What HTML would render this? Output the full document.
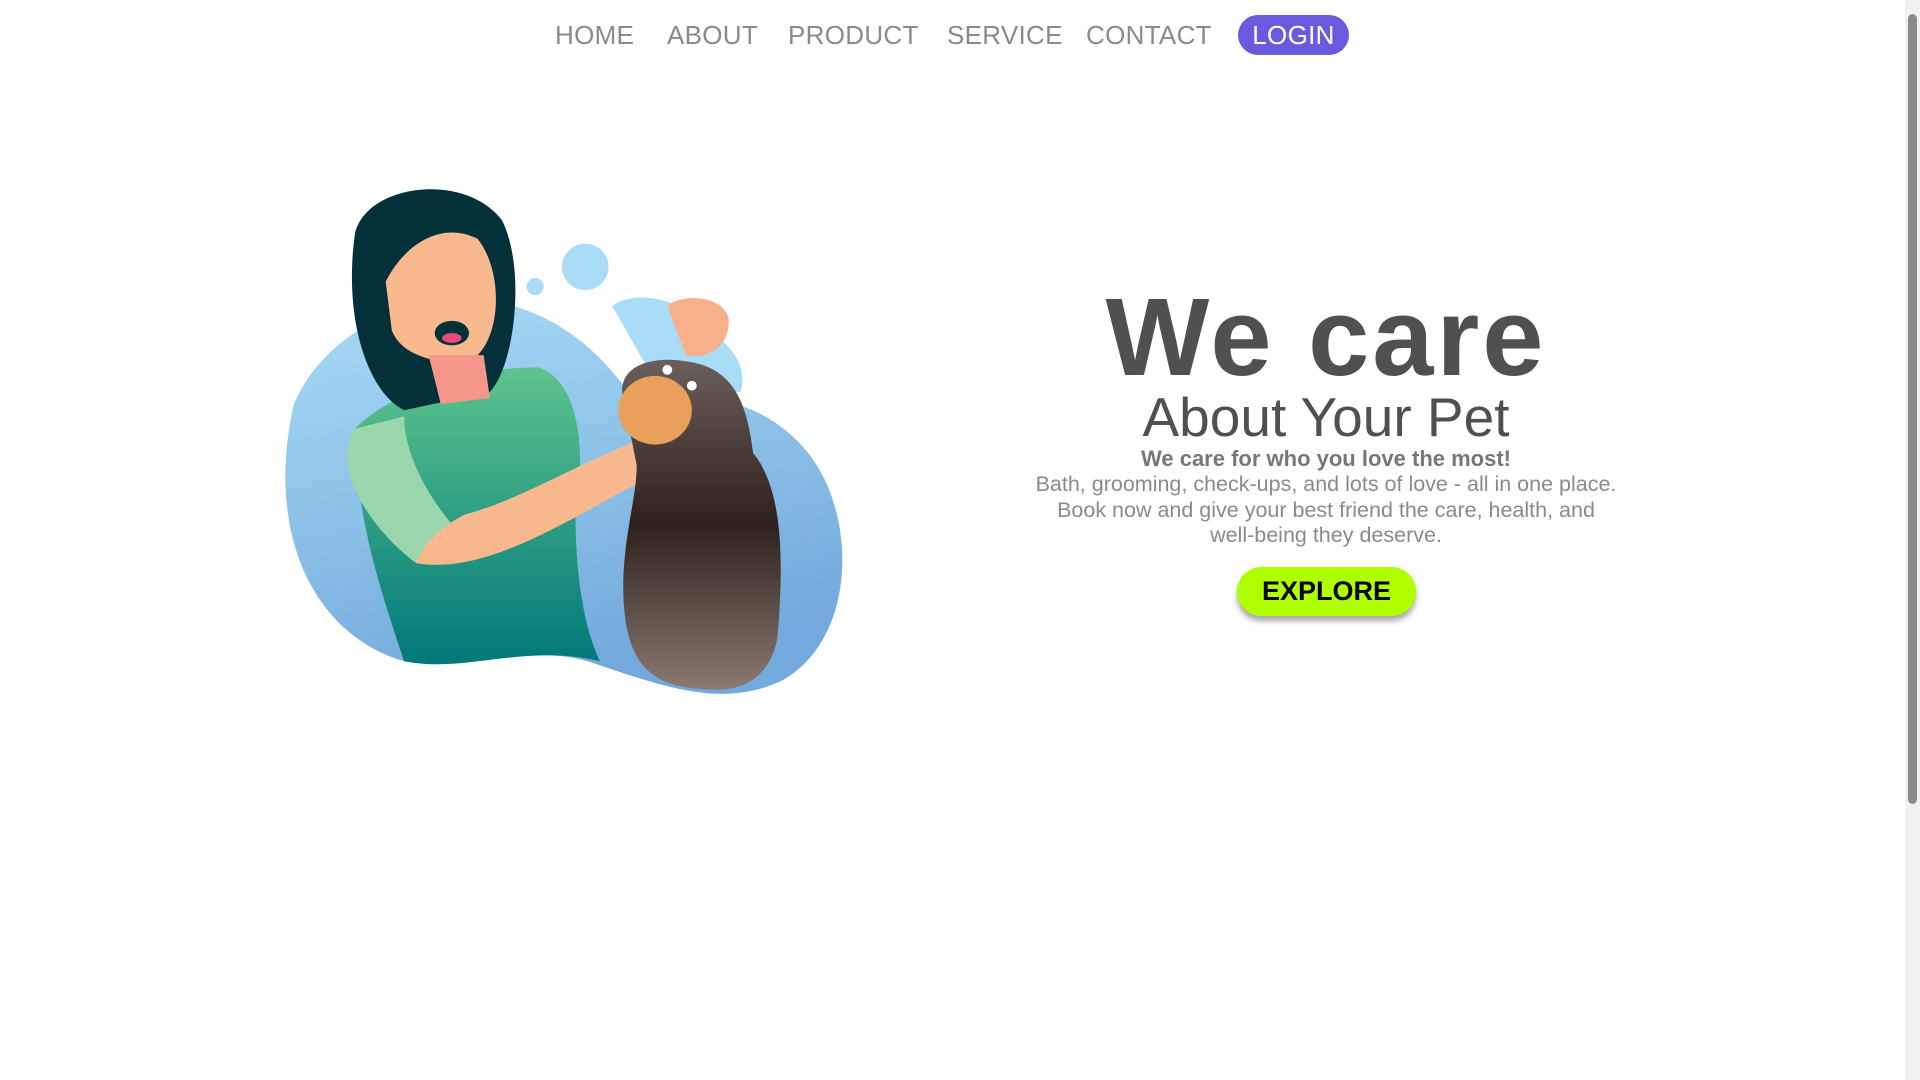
<!DOCTYPE html>
<html><head><meta charset="utf-8"><style>
*{margin:0;padding:0;box-sizing:border-box}
body{width:1920px;height:1080px;overflow:hidden;background:#fff;font-family:"Liberation Sans",sans-serif;position:relative}
nav{position:absolute;top:15px;left:0;width:1905px;height:40px}
nav a{position:absolute;top:0;line-height:40px;font-size:26px;color:#8a8a8a;text-decoration:none;letter-spacing:0.3px}
.login{background:#6a5ae0;color:#fff!important;border-radius:20px;width:111px;text-align:center}
.sb{position:absolute;right:0;top:0;width:15px;height:1080px;background:#f1f1f1}
.sb div{position:absolute;left:3px;top:14px;width:9px;height:790px;background:#8b8b8b;border-radius:5px}
.t{position:absolute;left:976px;width:700px;text-align:center;color:#505050}
.btn{position:absolute;left:1237px;top:567px;width:179px;height:49px;border-radius:25px;background:#b0ff00;box-shadow:0 5px 6px rgba(0,0,0,.35);font-weight:bold;font-size:27px;line-height:49px;text-align:center;color:#000}
</style></head><body>
<svg style="position:absolute;left:0;top:0" width="1920" height="1080" viewBox="0 0 1568 882">
<defs>
<linearGradient id="bl" x1="0" y1="0" x2="0.3" y2="1"><stop offset="0" stop-color="#a9dcf6"/><stop offset="1" stop-color="#73a9dc"/></linearGradient>
<linearGradient id="gr" x1="0" y1="0" x2="0" y2="1"><stop offset="0" stop-color="#5ec48d"/><stop offset="1" stop-color="#00787a"/></linearGradient>
<linearGradient id="dg" x1="0" y1="0" x2="0" y2="1"><stop offset="0" stop-color="#6b5f5c"/><stop offset="0.5" stop-color="#2e201c"/><stop offset="1" stop-color="#8a7a72"/></linearGradient>
</defs>
<path d="M240 330 C270 260 360 230 420 250 C470 265 500 300 520 330 C560 320 620 320 660 370 C700 420 700 520 640 555 C590 580 540 560 480 540 C430 525 380 550 330 540 C260 520 215 440 240 330Z" fill="url(#bl)"/>
<path d="M500 250 C520 235 560 245 580 270 C600 285 610 300 605 320 L540 320 Z" fill="#a9dcf6"/>
<circle cx="478" cy="218" r="19" fill="#a9dcf6"/><circle cx="437" cy="234" r="7" fill="#a9dcf6"/>
<path d="M290 350 C320 320 380 300 440 300 C470 310 480 360 470 420 C470 480 480 520 490 540 C430 525 380 550 330 540 C310 480 290 420 290 350Z" fill="url(#gr)"/>
<path d="M290 350 C270 380 300 430 340 460 L380 440 C350 410 330 370 330 340Z" fill="#9bd6ad"/>
<path d="M340 460 C400 470 470 420 530 390 C560 380 580 390 575 370 C570 350 540 350 520 360 C470 380 420 410 380 420 C360 430 345 445 340 460Z" fill="#f9b98f"/>
<path d="M290 190 C300 150 380 140 410 180 C430 220 420 300 400 320 L330 335 C300 320 280 260 290 190Z" fill="#04303a"/>
<path d="M315 230 C330 200 360 180 390 195 C410 220 410 270 390 290 C370 300 330 295 320 270 Z" fill="#f9b98f"/>
<path d="M350 290 L360 330 L400 325 L395 290Z" fill="#f5968a"/>
<ellipse cx="369" cy="272" rx="14" ry="10" fill="#04303a"/><ellipse cx="369" cy="276" rx="8" ry="4" fill="#e84a7a"/>
<path d="M510 330 C500 300 530 290 560 295 C600 300 610 330 615 370 C640 400 640 460 635 520 C630 550 610 565 580 563 C540 562 515 550 510 500 C505 450 520 410 520 380Z" fill="url(#dg)"/>
<ellipse cx="535" cy="335" rx="30" ry="28" fill="#e8a05a"/>
<path d="M545 250 C555 240 590 240 595 260 C597 280 580 295 560 290Z" fill="#f7b08a"/>
<circle cx="565" cy="315" r="4" fill="#fff"/><circle cx="545" cy="302" r="4" fill="#fff"/>
</svg>
<nav>
<a style="left:555px">HOME</a>
<a style="left:667px">ABOUT</a>
<a style="left:788px">PRODUCT</a>
<a style="left:947px">SERVICE</a>
<a style="left:1086px">CONTACT</a>
<a class="login" style="left:1238px">LOGIN</a>
</nav>
<div class="t" style="top:278px;font-size:110px;font-weight:900;line-height:120px;letter-spacing:3px">We care</div>
<div class="t" style="top:384px;font-size:55px;line-height:66px">About Your Pet</div>
<div class="t" style="top:446px;font-size:22px;font-weight:bold;color:#777;line-height:26px">We care for who you love the most!</div>
<div class="t" style="top:472px;font-size:21.5px;color:#8a8a8a;line-height:25.5px">Bath, grooming, check-ups, and lots of love - all in one place.<br>Book now and give your best friend the care, health, and<br>well-being they deserve.</div>
<div class="btn">EXPLORE</div>
<div class="sb"><div></div></div>
</body></html>
